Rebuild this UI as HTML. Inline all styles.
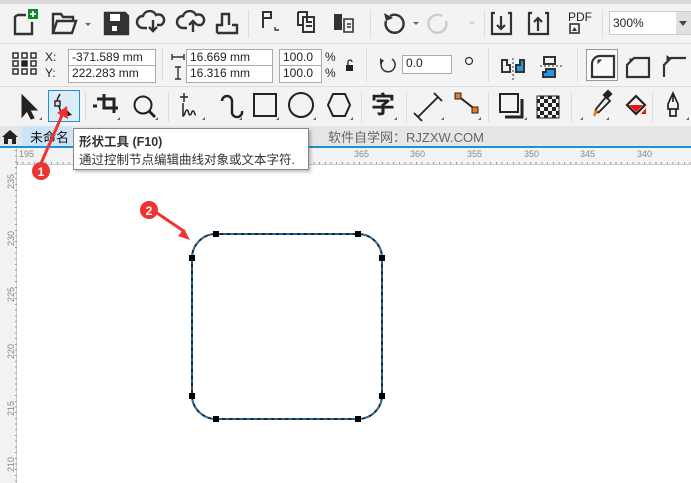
<!DOCTYPE html>
<html><head><meta charset="utf-8"><style>
*{margin:0;padding:0;box-sizing:border-box}
body{width:691px;height:483px;overflow:hidden;background:#fff;font-family:"Liberation Sans","Noto Sans CJK SC",sans-serif;position:relative}
.a{position:absolute}
.bar{position:absolute;left:0;width:691px;background:#f3f3f3}
.inp{position:absolute;background:#fff;border:1px solid #aaa;font-size:12px;color:#222;padding-left:3px;line-height:15px;height:18px}
.lbl{position:absolute;font-size:12px;color:#222}
.sep{position:absolute;width:1px;background:#ddd}
svg{position:absolute;overflow:visible}
</style></head><body>
<div class="bar" style="top:0;height:4px;background:#d9d9d9"></div>
<div class="bar" style="top:4px;height:39px"></div>
<div class="bar" style="top:43px;height:1px;background:#ddd"></div>
<div class="bar" style="top:44px;height:42px"></div>
<div class="bar" style="top:86px;height:1px;background:#ddd"></div>
<div class="bar" style="top:87px;height:39px"></div>
<div class="bar" style="top:126px;height:20px;background:#e6e6e6"></div>
<div class="bar" style="top:146px;height:2px;background:#1e90d6"></div>
<div class="bar" style="top:148px;height:17px;background:#f3f3f3;border-bottom:1px solid #ccc"></div>
<div class="a" style="left:0;top:148px;width:17px;height:335px;background:#f3f3f3;border-right:1px solid #ccc"></div>

<!-- row1 icons -->
<svg width="691" height="45" style="left:0;top:0" fill="none" stroke="#333" stroke-width="2.4">
<path d="M17 15h9M17 15l-2 2v17h17V22" /><rect x="28" y="9" width="10" height="10" fill="#0a8a2a" stroke="none"/><path d="M33 11v6M30 14h6" stroke="#fff" stroke-width="1.6"/>
<path d="M53 33V14h8l2 3h10v4M53 33l4-12h19l-4 12z"/><path d="M85 23l3 3 3-3z" fill="#666" stroke="none"/>
<path d="M105 13h20l3 3v18h-23z" fill="#333"/><rect x="110" y="14" width="10" height="7" fill="#fff" stroke="none"/><rect x="112" y="26" width="5" height="5" fill="#fff" stroke="none"/>
<path d="M147 28h-4a6 6 0 0 1 0-12a7 7 0 0 1 13-1a5 5 0 0 1 5 10h-4M153 20v11M149 27l4 4 4-4"/>
<path d="M187 28h-4a6 6 0 0 1 0-12a7 7 0 0 1 13-1a5 5 0 0 1 5 10h-4M193 32v-11M189 25l4-4 4 4"/>
<path d="M217 33h20v-8h-5M217 33v-8h5v-11h7v11"/>
<path d="M263 12h8v6h-8zM263 18v10" stroke-width="2"/><path d="M275 27v3h4" stroke-width="1.4"/>
<path d="M298 12h9v10M298 12v13h4M303 17h11v15h-11zM306 22h6M306 26h6" stroke-width="2"/>
<rect x="334" y="14" width="8" height="16" fill="#333" stroke="none"/><path d="M344 19h9v13h-9zM347 24h4M347 27h4" stroke-width="1.6"/>
<path d="M390 16a9 9 0 1 1-4 5" /><path d="M384 13l2 8 7-3" fill="#333" stroke="none"/><path d="M413 22l3 3 3-3z" fill="#666" stroke="none"/>
<path d="M442 16a9 9 0 1 0 4 5" stroke="#ccc"/><path d="M469 22l3 3 3-3z" fill="#ccc" stroke="none"/>
<path d="M495 13h-3v21h19V13h-3M501 16v13M497 25l4 4 4-4" stroke-width="2.2"/>
<path d="M532 13h-3v21h19V13h-3M538 31v-13M534 22l4-4 4 4" stroke-width="2.2"/>
</svg>
<div class="lbl" style="left:568px;top:11px;font-size:12px;line-height:12px">PDF</div>
<svg width="20" height="12" style="left:569px;top:23px"><rect x="1" y="1" width="9" height="9" fill="none" stroke="#333" stroke-width="1.6"/><path d="M3 8l2.5-4 2.5 4z" fill="#333"/></svg>
<div class="sep" style="left:248px;top:10px;height:28px"></div>
<div class="sep" style="left:370px;top:10px;height:28px"></div>
<div class="sep" style="left:484px;top:10px;height:28px"></div>
<div class="sep" style="left:602px;top:10px;height:28px"></div>
<div class="inp" style="left:609px;top:11px;width:82px;height:24px;line-height:22px;font-size:12px;border-color:#ccc">300%</div>
<div class="a" style="left:676px;top:12px;width:15px;height:22px;background:#e0e0e0"></div>
<svg width="10" height="6" style="left:679px;top:21px"><path d="M0 0h8l-4 5z" fill="#444"/></svg>

<!-- row2 -->
<svg width="30" height="30" style="left:12px;top:52px" fill="none" stroke="#222" stroke-width="1.4">
<rect x="1" y="1" width="5" height="5"/><rect x="10" y="1" width="5" height="5"/><rect x="19" y="1" width="5" height="5"/>
<rect x="1" y="9" width="5" height="5"/><rect x="10" y="9" width="5" height="5" fill="#222"/><rect x="19" y="9" width="5" height="5"/>
<rect x="1" y="17" width="5" height="5"/><rect x="10" y="17" width="5" height="5"/><rect x="19" y="17" width="5" height="5"/></svg>
<div class="lbl" style="left:45px;top:50px">X:</div><div class="lbl" style="left:45px;top:66px">Y:</div>
<div class="inp" style="left:68px;top:49px;width:88px">-371.589 mm</div>
<div class="inp" style="left:68px;top:65px;width:88px">222.283 mm</div>
<div class="sep" style="left:162px;top:48px;height:34px"></div>
<svg width="14" height="32" style="left:171px;top:50px" stroke="#333" stroke-width="1.4" fill="none"><path d="M1 7h12M1 4v6M13 4v6"/><path d="M7 17v12M4 17h6M4 29h6"/></svg>
<div class="inp" style="left:186px;top:49px;width:87px">16.669 mm</div>
<div class="inp" style="left:186px;top:65px;width:87px">16.316 mm</div>
<div class="inp" style="left:279px;top:49px;width:43px">100.0</div>
<div class="inp" style="left:279px;top:65px;width:43px">100.0</div>
<div class="lbl" style="left:325px;top:50px">%</div><div class="lbl" style="left:325px;top:66px">%</div>
<svg width="10" height="12" style="left:345px;top:60px"><path d="M3 5V2a2 2 0 0 1 4 0" fill="none" stroke="#222" stroke-width="1.3"/><rect x="1" y="5" width="7" height="6" fill="#222"/></svg>
<div class="sep" style="left:366px;top:48px;height:34px"></div>
<svg width="20" height="20" style="left:378px;top:55px"><path d="M14 4a7 7 0 1 1-9 1" fill="none" stroke="#333" stroke-width="1.5"/><path d="M2 3l4 3-4 3z" fill="#333"/></svg>
<div class="inp" style="left:402px;top:55px;width:50px;height:19px">0.0</div>
<svg width="10" height="10" style="left:465px;top:57px"><circle cx="4" cy="4" r="3.5" fill="none" stroke="#333" stroke-width="1.2"/></svg>
<div class="sep" style="left:488px;top:48px;height:34px"></div>
<svg width="80" height="30" style="left:500px;top:52px" stroke-width="2" fill="none">
<path d="M2 8h5v5h3v7H2z" stroke="#333"/><path d="M13 6v22" stroke="#333" stroke-dasharray="2 2" stroke-width="1"/><path d="M16 20h8V8h-4v5h-4z" fill="#1e9be0" stroke="#333"/>
<path d="M44 5h11v7H44z" stroke="#333"/><path d="M40 14h24" stroke="#333" stroke-dasharray="2 2" stroke-width="1"/><path d="M46 17h9v8H43v-5h3z" fill="#1e9be0" stroke="#333"/></svg>
<div class="sep" style="left:577px;top:48px;height:34px"></div>
<div class="a" style="left:586px;top:49px;width:32px;height:32px;border:1px solid #999;background:#fafafa"></div>
<svg width="110" height="30" style="left:590px;top:52px" fill="none" stroke="#333" stroke-width="2.2">
<path d="M2 25V12a8 8 0 0 1 8-8h14v21z"/><path d="M8 8l3 0-3 3z" fill="#333" stroke-width="1"/>
<path d="M37 25V13l7-7h15v19z"/><path d="M40 7l3 0-3 3z" fill="#333" stroke-width="1"/>
<path d="M74 25V13l7-7h15"/><path d="M77 4l3 2-3 2z" fill="#333" stroke-width="1"/></svg>

<!-- row3 -->
<div class="a" style="left:48px;top:90px;width:32px;height:32px;border:1px solid #1e90d6;background:#dcecf9"></div>
<svg width="691" height="40" style="left:0;top:87px" fill="none" stroke="#222" stroke-width="2.2">
<path d="M22 8v22l5-6 4 8 3-1-4-8h7z" fill="#222" stroke-width="1"/><path d="M42 30l-3 3h3z" fill="#666" stroke="none"/>
<path d="M60 7c-2 4-4 6-2 10c2 4 3 10 3 14" stroke-width="1.5"/><rect x="55" y="14" width="5" height="5" fill="#ddd" stroke="#222" stroke-width="1.4"/><path d="M65 21l7 7-8 2z" fill="#222" stroke="none"/>
<path d="M97 12h17v14M104 7v14h14M93 19h4" stroke-width="3"/><path d="M120 30l-3 3h3z" fill="#666" stroke="none"/>
<circle cx="143" cy="18" r="8.5" stroke-width="2"/><path d="M149 24l6 6" stroke-width="2.8"/><path d="M158 30l-3 3h3z" fill="#666" stroke="none"/>
<path d="M184 6v9M180 10h8" stroke-width="1.4"/><path d="M183 16v13c2 0 2-6 4-6s1 5 3 5 1-4 3-4 1 4 3 4" stroke-width="1.5"/><path d="M205 30l-3 3h3z" fill="#666" stroke="none"/>
<path d="M222 14a5 5 0 0 1 10 0v12a5 5 0 0 0 10-2" stroke-width="2.4"/><path d="M242 30l-3 3h3z" fill="#666" stroke="none"/>
<rect x="254" y="7" width="22" height="22" stroke-width="2"/><path d="M279 30l-3 3h3z" fill="#666" stroke="none"/>
<circle cx="301" cy="18" r="12" stroke-width="2"/><path d="M316 30l-3 3h3z" fill="#666" stroke="none"/>
<path d="M333 7h12l5 11-5 11h-12l-5-11z" stroke-width="2"/><path d="M353 30l-3 3h3z" fill="#666" stroke="none"/>
<path d="M397 30l-3 3h3z" fill="#666" stroke="none"/>
<path d="M418 30l20-20M414 26l8 8M434 6l8 8" stroke-width="1.8"/><path d="M444 30l-3 3h3z" fill="#666" stroke="none"/>
<path d="M458 9l18 14" stroke-width="2"/><rect x="455" y="6" width="6" height="6" fill="#f07a1a" stroke="#222" stroke-width="1"/><rect x="472" y="20" width="6" height="6" fill="#f07a1a" stroke="#222" stroke-width="1"/><path d="M481 30l-3 3h3z" fill="#666" stroke="none"/>
<rect x="500" y="7" width="18" height="18" stroke-width="2"/><path d="M522 12v18H505" stroke-width="3"/><path d="M527 30l-3 3h3z" fill="#666" stroke="none"/>
<path d="M583 30l-3 3h3z" fill="#666" stroke="none"/>
<path d="M606 10l4 4-11 11-4 1 1-4z" stroke-width="1.8"/><path d="M604 8l4-4 3 3-4 4z" fill="#222"/><path d="M597 23l-3 6" stroke="#f07a1a" stroke-width="2.5"/><path d="M609 30l-3 3h3z" fill="#666" stroke="none"/>
<path d="M627 18l9-9 9 9-9 9z" stroke-width="2.2"/><path d="M629 18h14l-7 7z" fill="#e11" stroke="none"/><path d="M641 27l5-6v6z" fill="#e11" stroke="none"/>
<path d="M673 6l-5 11v5h10v-5zM673 6v9M670 22v7h6v-7" stroke-width="1.7"/><path d="M689 30l-3 3h3z" fill="#666" stroke="none"/>
</svg>
<div class="a" style="left:371px;top:91px;font-size:24px;font-weight:bold;color:#222;line-height:30px">字</div>
<svg width="32" height="32" style="left:536px;top:91px"><defs><pattern id="ch" width="8" height="8" patternUnits="userSpaceOnUse"><rect width="4" height="4" fill="#222"/><rect x="4" y="4" width="4" height="4" fill="#222"/></pattern></defs><rect x="1" y="5" width="22" height="22" fill="url(#ch)" stroke="#222" stroke-width="1"/></svg>
<div class="sep" style="left:85px;top:92px;height:30px"></div>
<div class="sep" style="left:168px;top:92px;height:30px"></div>
<div class="sep" style="left:361px;top:92px;height:30px"></div>
<div class="sep" style="left:406px;top:92px;height:30px"></div>
<div class="sep" style="left:488px;top:92px;height:30px"></div>
<div class="sep" style="left:571px;top:92px;height:30px"></div>
<div class="sep" style="left:652px;top:92px;height:30px"></div>

<!-- tab bar -->
<svg width="16" height="14" style="left:2px;top:130px"><path d="M8 0l8 7h-2v7H10V9H6v5H2V7H0z" fill="#222"/></svg>
<div class="a" style="left:22px;top:126px;width:50px;height:20px;background:#cce4f7"></div>
<div class="a" style="left:30px;top:127px;font-size:13px;color:#111">未命名</div>
<div class="a" style="left:328px;top:127px;font-size:13px;color:#666">软件自学网：RJZXW.COM</div>

<!-- ruler -->
<div class="a" style="left:19px;top:149px;font-size:9px;color:#888;width:691px">
<span class="a" style="left:0">195</span><span class="a" style="left:335px">365</span><span class="a" style="left:391px">360</span><span class="a" style="left:448px">355</span><span class="a" style="left:505px">350</span><span class="a" style="left:561px">345</span><span class="a" style="left:618px">340</span></div>
<div class="a" style="left:17px;top:162px;width:674px;height:2px;background:repeating-linear-gradient(90deg,#999 0 1px,transparent 1px 5.7px)"></div>
<div class="a" style="left:15px;top:150px;width:2px;height:333px;background:repeating-linear-gradient(180deg,#999 0 1px,transparent 1px 5.7px)"></div>
<div class="a" style="left:4px;top:150px;font-size:9px;color:#888;line-height:9px;width:10px;height:333px">
<span class="a" style="top:27px;transform:rotate(-90deg)">235</span><span class="a" style="top:84px;transform:rotate(-90deg)">230</span><span class="a" style="top:140px;transform:rotate(-90deg)">225</span><span class="a" style="top:197px;transform:rotate(-90deg)">220</span><span class="a" style="top:254px;transform:rotate(-90deg)">215</span><span class="a" style="top:310px;transform:rotate(-90deg)">210</span></div>

<!-- tooltip -->
<div class="a" style="left:73px;top:128px;width:236px;height:42px;background:#fff;border:1px solid #888;box-shadow:2px 2px 3px rgba(0,0,0,.25)"></div>
<div class="a" style="left:79px;top:131px;font-size:12.5px;font-weight:bold;color:#333">形状工具 (F10)</div>
<div class="a" style="left:79px;top:149px;font-size:12.5px;color:#333">通过控制节点编辑曲线对象或文本字符.</div>

<!-- shape -->
<svg width="691" height="483" style="left:0;top:0">
<rect x="192" y="234" width="190" height="185" rx="24" fill="none" stroke="#222" stroke-width="2"/>
<rect x="192" y="234" width="190" height="185" rx="24" fill="none" stroke="#1e90e6" stroke-width="1.2" stroke-dasharray="4 3"/>
<g fill="#000"><rect x="213" y="231" width="6" height="6"/><rect x="355" y="231" width="6" height="6"/><rect x="189" y="255" width="6" height="6"/><rect x="379" y="255" width="6" height="6"/><rect x="189" y="393" width="6" height="6"/><rect x="379" y="393" width="6" height="6"/><rect x="213" y="416" width="6" height="6"/><rect x="355" y="416" width="6" height="6"/></g>
<path d="M39 168L63 113" stroke="#e33" stroke-width="3"/><path d="M57 113l10-7 1 13z" fill="#e33"/>
<circle cx="41" cy="171" r="9" fill="#e33"/><text x="41" y="176" font-size="12" fill="#fff" text-anchor="middle" font-family="Liberation Sans" font-weight="bold">1</text>
<path d="M157 213L185 232" stroke="#e33" stroke-width="3"/><path d="M178 236l12 4-6-11z" fill="#e33"/>
<circle cx="149" cy="210" r="9" fill="#e33"/><text x="149" y="215" font-size="12" fill="#fff" text-anchor="middle" font-family="Liberation Sans" font-weight="bold">2</text>
</svg>
</body></html>
